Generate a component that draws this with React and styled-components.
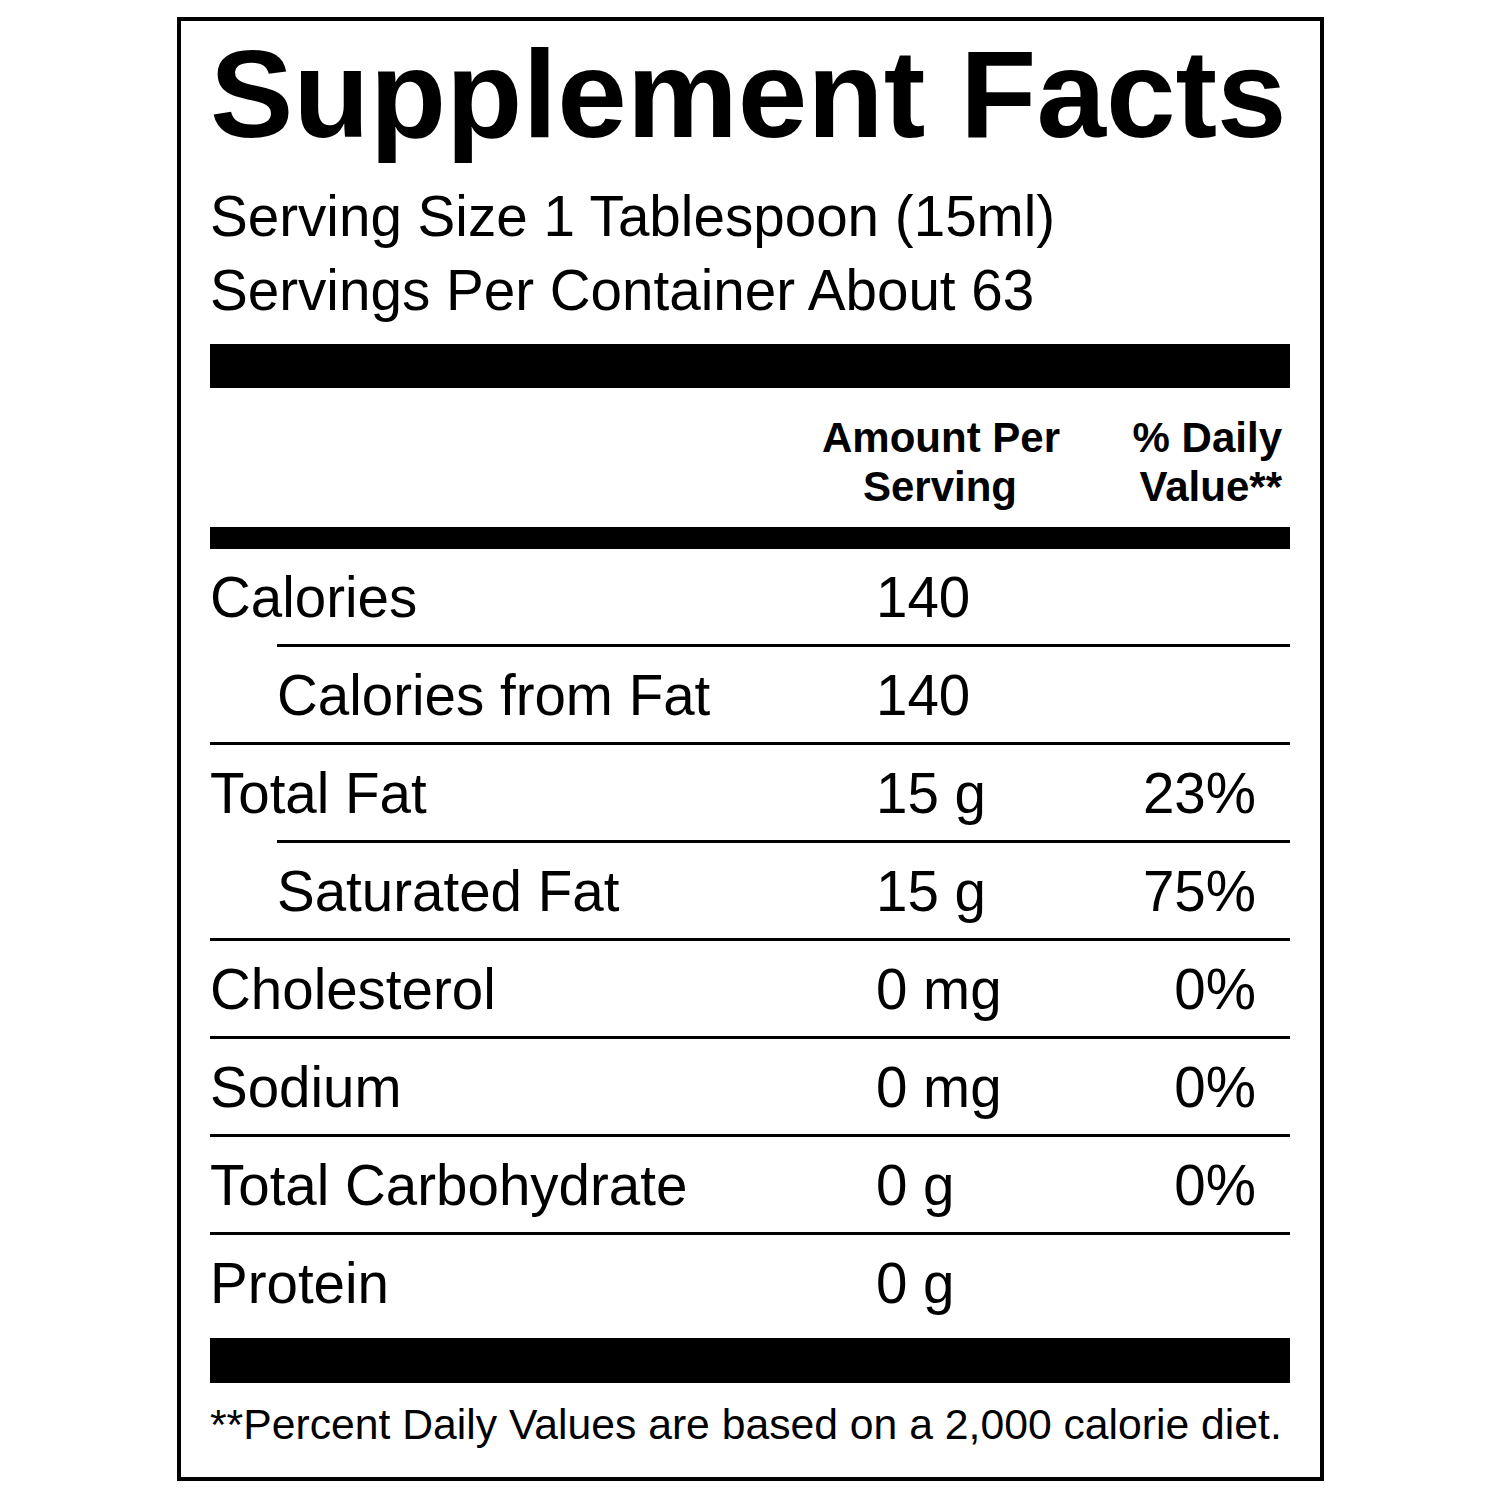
import React from 'react'
import styled, { createGlobalStyle } from 'styled-components'

const rows = [
  { label: 'Calories', amount: '140', dv: '', indent: false, first: true },
  { label: 'Calories from Fat', amount: '140', dv: '', indent: true },
  { label: 'Total Fat', amount: '15 g', dv: '23%', indent: false },
  { label: 'Saturated Fat', amount: '15 g', dv: '75%', indent: true },
  { label: 'Cholesterol', amount: '0 mg', dv: '0%', indent: false },
  { label: 'Sodium', amount: '0 mg', dv: '0%', indent: false },
  { label: 'Total Carbohydrate', amount: '0 g', dv: '0%', indent: false },
  { label: 'Protein', amount: '0 g', dv: '', indent: false, last: true },
]

export default function App() {
  return (
    <>
      <Global />
      <Label>
        <Title>Supplement Facts</Title>
        <Serving>
          <div>Serving Size 1 Tablespoon (15ml)</div>
          <div>Servings Per Container About 63</div>
        </Serving>
        <Bar $h={44} $top={16} />
        <Header>
          <span />
          <HeadCell $align="center">Amount Per<br />Serving</HeadCell>
          <HeadCell $align="right">% Daily<br />Value**</HeadCell>
        </Header>
        <Bar $h={22} $top={0} />
        {rows.map((r) => (
          <Row key={r.label} $indent={r.indent} $first={r.first} $last={r.last}>
            <span>{r.label}</span>
            <span>{r.amount}</span>
            <Dv>{r.dv}</Dv>
          </Row>
        ))}
        <Bar $h={45} $top={0} />
        <Foot>**Percent Daily Values are based on a 2,000 calorie diet.</Foot>
      </Label>
    </>
  )
}

const Global = createGlobalStyle`
  body{
    margin:0;
    background:#fff;
    color:#000;
    font-family:"Liberation Sans", Arial, sans-serif;
  }
`

const Label = styled.div`
  margin:17px 0 0 177px;
  width:1147px;
  box-sizing:border-box;
  border:4px solid #000;
  padding:11px 30px 28px 29px;
`

const Title = styled.h1`
  margin:0;
  font-size:125px;
  line-height:124px;
  font-weight:700;
  white-space:nowrap;
`

const Serving = styled.div`
  margin-top:24px;
  font-size:56.6px;
  line-height:74px;
  white-space:nowrap;
`

const Bar = styled.div`
  height:${(p) => p.$h}px;
  margin-top:${(p) => p.$top}px;
  background:#000;
`

const Header = styled.div`
  display:grid;
  grid-template-columns:612px 236px 1fr;
  padding:25px 0 16px;
  font-size:42px;
  line-height:49px;
  font-weight:700;
`

const HeadCell = styled.div`
  text-align:${(p) => p.$align};
  padding-right:${(p) => (p.$align === 'right' ? '8px' : '0')};
  white-space:nowrap;
`

const Row = styled.div`
  display:grid;
  grid-template-columns:${(p) => (p.$indent ? '599px' : '666px')} 1fr 164px;
  margin-left:${(p) => (p.$indent ? '67px' : '0')};
  border-top:${(p) => (p.$first ? 'none' : '3px solid #000')};
  height:${(p) => (p.$last ? 99 : 91)}px;
  padding-top:4px;
  font-size:56.5px;
  line-height:89px;
  white-space:nowrap;
`

const Dv = styled.span`
  text-align:right;
  padding-right:34px;
`

const Foot = styled.div`
  margin-top:16px;
  font-size:42.7px;
  line-height:50px;
  white-space:nowrap;
`
